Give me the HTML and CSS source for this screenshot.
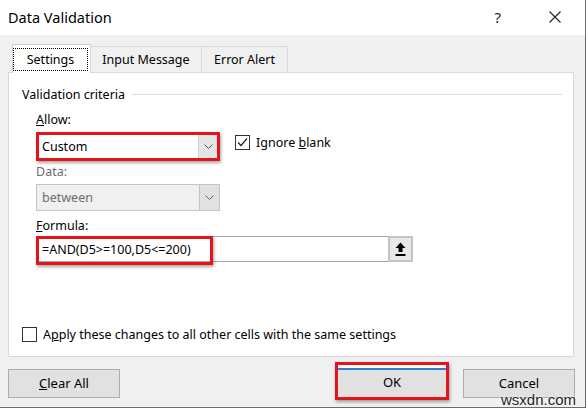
FILE: index.html
```html
<!DOCTYPE html>
<html lang="en">
<head>
  <meta charset="UTF-8" />
  <title>Data Validation</title>
  <link rel="stylesheet" href="styles.css">
</head>
<body>
  <div class="window">
    <div class="titlebar">
      <span class="title">Data Validation</span>
      <span class="help">?</span>
      <svg class="close" width="12" height="12" viewBox="0 0 12 12">
        <path d="M0.5 0.5L11.5 11.5M11.5 0.5L0.5 11.5" stroke="#222" stroke-width="1.1" fill="none"/>
      </svg>
    </div>

    <div class="main">
      <div class="tabs">
        <div class="tab active"><span class="focus">Settings</span></div>
        <div class="tab">Input Message</div>
        <div class="tab">Error Alert</div>
      </div>

      <div class="panel">
        <div class="group-head">
          <span>Validation criteria</span>
          <span class="rule"></span>
        </div>

        <div class="criteria">
          <div class="label"><u>A</u>llow:</div>
          <div class="allow-row">
            <div class="mark">
              <div class="combo">
                <span class="value">Custom</span>
                <span class="drop">
                  <svg width="9" height="5" viewBox="0 0 9 5"><path d="M0.5 0.5L4.5 4.5L8.5 0.5" stroke="#555" fill="none"/></svg>
                </span>
              </div>
            </div>
            <label class="check ignore">
              <span class="box">
                <svg width="13" height="13" viewBox="0 0 13 13"><path d="M2 6.5L5 9.5L11 2.5" stroke="#222" stroke-width="1.2" fill="none"/></svg>
              </span>
              <span>Ignore <u>b</u>lank</span>
            </label>
          </div>

          <div class="label muted data-label">Data:</div>
          <div class="combo disabled">
            <span class="value">between</span>
            <span class="drop">
              <svg width="9" height="5" viewBox="0 0 9 5"><path d="M0.5 0.5L4.5 4.5L8.5 0.5" stroke="#666" fill="none"/></svg>
            </span>
          </div>

          <div class="label formula-label"><u>F</u>ormula:</div>
          <div class="formula-row">
            <div class="refedit">
              <span class="value">=AND(D5&gt;=100,D5&lt;=200)</span>
              <span class="collapse">
                <svg width="11" height="14" viewBox="0 0 11 14">
                  <path d="M5.5 0.5L10.5 6H7.5V10H3.5V6H0.5Z" fill="#000"/>
                  <rect x="0.5" y="12" width="10" height="2" fill="#000"/>
                </svg>
              </span>
            </div>
            <div class="mark overlay"></div>
          </div>
        </div>

        <label class="check apply">
          <span class="box"></span>
          <span>A<u>p</u>ply these changes to all other cells with the same settings</span>
        </label>
      </div>

      <div class="buttons">
        <button class="btn"><u>C</u>lear All</button>
        <div class="mark ok-mark">
          <button class="btn default">OK</button>
        </div>
        <button class="btn">Cancel</button>
      </div>
    </div>
  </div>
  <div class="watermark">wsxdn.com</div>
</body>
</html>
```

FILE: styles.css
```css
body {
  margin: 0;
  width: 588px;
  height: 409px;
  background: #fff;
  font-family: 'Noto Sans', 'Segoe UI', sans-serif;
  font-size: 12.5px;
  color: #000;
  position: relative;
  overflow: hidden;
}

.window {
  width: 586px;
  height: 408px;
  box-sizing: border-box;
  border-right: 1px solid #6b6b6b;
  border-bottom: 1px solid #6b6b6b;
  background: #f0f0f0;
  display: flex;
  flex-direction: column;
}

.titlebar {
  height: 35px;
  flex: none;
  background: #fff;
  display: flex;
  align-items: center;
  padding-left: 8px;
}

.title {
  font-size: 14.5px;
  margin-top: -1px;
}

.help {
  margin-left: auto;
  font-size: 15px;
  color: #222;
  margin-top: -2px;
}

.close {
  margin-left: 48px;
  margin-right: 24px;
  margin-top: -2px;
}

.main {
  padding: 9px 0 0 8px;
  flex: 1;
  display: flex;
  flex-direction: column;
}

/* tab strip */
.tabs {
  display: flex;
  align-items: flex-end;
  padding-left: 4px;
  height: 28px;
  position: relative;
  z-index: 1;
}

.tab {
  height: 26px;
  box-sizing: border-box;
  border: 1px solid #d9d9d9;
  border-bottom: none;
  display: flex;
  align-items: center;
  justify-content: center;
  white-space: nowrap;
  margin-left: -1px;
}

.tab.active {
  width: 79px;
  height: 29px;
  margin-left: 0;
  background: #fff;
  padding: 0 3px 0 1px;
  margin-bottom: -1px;
  border-color: #d0d0d0;
}

.focus {
  outline: 1px dotted #000;
  width: 100%;
  height: 21px;
  display: flex;
  align-items: center;
  justify-content: center;
  margin-top: 1px;
}

.tab:nth-child(2) { width: 112px; }
.tab:nth-child(3) { width: 87px; }

.panel {
  width: 566px;
  height: 285px;
  box-sizing: border-box;
  background: #fff;
  border: 1px solid #d9d9d9;
  display: flex;
  flex-direction: column;
  padding: 11px 11px 14px 13px;
}

.group-head {
  display: flex;
  align-items: center;
  height: 20px;
}

.group-head .rule {
  flex: 1;
  height: 1px;
  background: #dcdcdc;
  margin-left: 7px;
}

.criteria {
  padding-left: 14px;
  margin-top: 7px;
}

.label {
  height: 18px;
  line-height: 18px;
}

.label.muted {
  color: #6d6d6d;
}

.data-label {
  margin-top: 2px;
}

.formula-label {
  margin-top: 6px;
}

.allow-row {
  display: flex;
  align-items: flex-start;
  margin-top: 3px;
}

/* red highlight frame */
.mark {
  border: 3px solid #e3151a;
  box-shadow: 1px 2px 3px rgba(0, 0, 0, 0.35);
}

.combo {
  width: 178px;
  height: 23px;
  display: flex;
  align-items: center;
  background: #fff;
}

.combo .value {
  flex: 1;
  padding-left: 3px;
}

.combo .drop {
  width: 18px;
  height: 100%;
  background: #e5e5e5;
  border-left: 1px solid #d0d0d0;
  display: flex;
  align-items: center;
  justify-content: center;
}

.combo.disabled {
  width: 184px;
  height: 27px;
  box-sizing: border-box;
  border: 1px solid #c4c4c4;
  background: #f0f0f0;
  color: #6d6d6d;
  margin-top: 3px;
}

.combo.disabled .value {
  padding-left: 5px;
}

.combo.disabled .drop {
  width: 19px;
  background: #e1e1e1;
  border-left: 1px solid #c4c4c4;
}

.check {
  display: flex;
  align-items: center;
}

.box {
  width: 15px;
  height: 15px;
  box-sizing: border-box;
  border: 1px solid #333;
  background: #fff;
  display: flex;
  align-items: center;
  justify-content: center;
  margin-right: 6px;
}

.ignore {
  margin-left: 15px;
  margin-top: 2px;
}

.formula-row {
  position: relative;
  margin-top: -2px;
}

.refedit {
  width: 377px;
  height: 26px;
  box-sizing: border-box;
  border: 1px solid #a6a6a6;
  display: flex;
  align-items: center;
  margin-top: 3px;
}

.refedit .value {
  flex: 1;
  padding-left: 5px;
}

.collapse {
  width: 25px;
  height: 26px;
  box-sizing: border-box;
  border: 2px solid #c4c4c4;
  background: #e9e9e9;
  margin-right: -1px;
  display: flex;
  align-items: center;
  justify-content: center;
}

.overlay {
  position: absolute;
  left: 0;
  top: 0;
  width: 171px;
  height: 23px;
}

.apply {
  margin-top: auto;
  height: 15px;
}

.buttons {
  display: flex;
  align-items: flex-start;
  margin-top: 5px;
}

.btn {
  font-family: inherit;
  font-size: 13px;
  width: 112px;
  height: 29px;
  box-sizing: border-box;
  background: #e1e1e1;
  border: 1px solid #adadad;
  color: #000;
  padding: 0 0 2px;
  margin-top: 7px;
}

.ok-mark {
  margin-left: 215px;
  height: 32px;
  width: 108px;
}

.btn.default {
  margin: 0;
  width: 108px;
  height: 32px;
  border: none;
  border-top: 3px solid #fff;
  box-shadow: inset 0 2px 0 #2f7fd0;
}

.ok-mark + .btn {
  margin-left: 14px;
}

.watermark {
  position: absolute;
  right: 12px;
  bottom: 2px;
  line-height: 15px;
  font-family: 'Liberation Sans', sans-serif;
  font-size: 15px;
  color: #222;
  text-shadow: 0 0 2px #fff, 0 0 2px #fff;
}
```
